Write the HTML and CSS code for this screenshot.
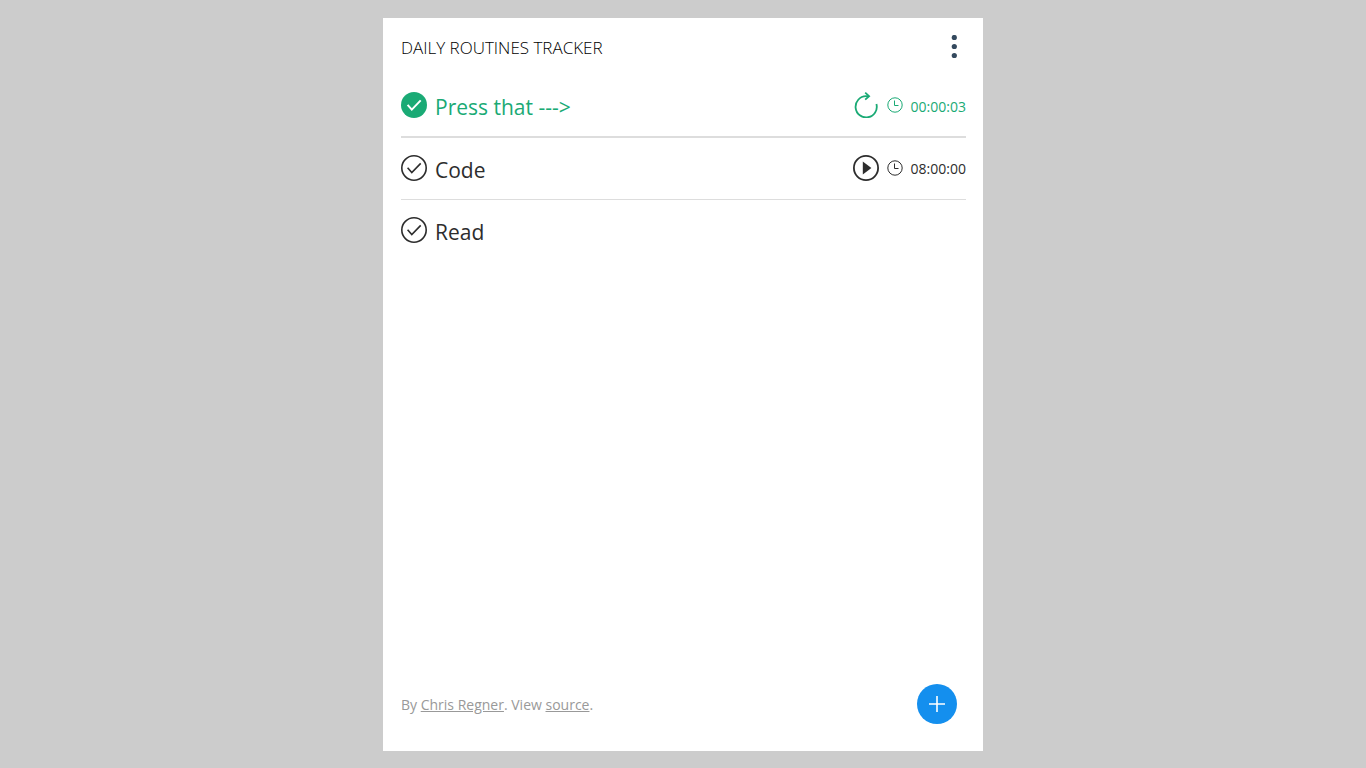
FILE: index.html
```html
<!DOCTYPE html>
<html lang="en">
<head>
    <meta charset="UTF-8">
    <meta name="viewport" content="width=device-width, initial-scale=1.0">
    <title>Daily Routines Tracker</title>
    <link rel="stylesheet" href="styles.css">
</head>
<body>
    <div class="container">
        <header class="header">
            <h1 class="title">Daily Routines Tracker</h1>
            <button type="button" class="iconButton menuButton" aria-label="Menu">
                <svg width="6" height="24" viewBox="0 0 6 24" fill="currentColor">
                    <circle cx="3.3" cy="2.5" r="2.6"/>
                    <circle cx="3.3" cy="11.5" r="2.6"/>
                    <circle cx="3.3" cy="20.5" r="2.6"/>
                </svg>
            </button>
        </header>
        <main class="content">
            <ul class="routines">
                <li class="routine done">
                    <button type="button" class="iconButton" aria-label="Mark as not done">
                        <svg width="26" height="26" viewBox="0 0 26 26" fill="none">
                            <circle cx="13" cy="13" r="13" fill="currentColor"/>
                            <path d="M6.6 12.8l4.2 4.8 8.9-9.2" stroke="#fff" stroke-width="2"/>
                        </svg>
                    </button>
                    <span class="routineName">Press that ---&gt;</span>
                    <button type="button" class="iconButton" aria-label="Restart">
                        <svg width="26" height="26" viewBox="0 0 26 26" fill="none" stroke="currentColor" stroke-width="1.8">
                            <path d="M15.5 4.2H13A10.6 10.6 0 1 0 23.4 12"/>
                            <path d="M12.2 0.7l3.9 3.5-3.9 3.5"/>
                        </svg>
                    </button>
                    <svg class="clock" width="16" height="16" viewBox="0 0 16 16" fill="none" stroke="currentColor">
                        <circle cx="8" cy="8" r="7.2"/>
                        <path d="M7.5 3.5v5h4"/>
                    </svg>
                    <time class="routineTime">00:00:03</time>
                </li>
                <li class="routine">
                    <button type="button" class="iconButton" aria-label="Mark as done">
                        <svg width="26" height="26" viewBox="0 0 26 26" fill="none" stroke="currentColor" stroke-width="1.6">
                            <circle cx="13" cy="13" r="12.2"/>
                            <path d="M6.6 12.8l4.2 4.8 8.9-9.2"/>
                        </svg>
                    </button>
                    <span class="routineName">Code</span>
                    <button type="button" class="iconButton" aria-label="Start">
                        <svg width="26" height="26" viewBox="0 0 26 26" fill="none">
                            <circle cx="13" cy="13" r="12.1" stroke="currentColor" stroke-width="1.8"/>
                            <path d="M9.8 6.6v13l8.6-6.5z" fill="currentColor"/>
                        </svg>
                    </button>
                    <svg class="clock" width="16" height="16" viewBox="0 0 16 16" fill="none" stroke="currentColor">
                        <circle cx="8" cy="8" r="7.2"/>
                        <path d="M7.5 3.5v5h4"/>
                    </svg>
                    <time class="routineTime">08:00:00</time>
                </li>
                <li class="routine">
                    <button type="button" class="iconButton" aria-label="Mark as done">
                        <svg width="26" height="26" viewBox="0 0 26 26" fill="none" stroke="currentColor" stroke-width="1.6">
                            <circle cx="13" cy="13" r="12.2"/>
                            <path d="M6.6 12.8l4.2 4.8 8.9-9.2"/>
                        </svg>
                    </button>
                    <span class="routineName">Read</span>
                </li>
            </ul>
        </main>
        <footer class="footer">
            <p class="credits">By <a href="#">Chris Regner</a>. View <a href="#">source</a>.</p>
            <button type="button" class="addButton" aria-label="Add routine">
                <svg width="16" height="16" viewBox="0 0 16 16" fill="none" stroke="currentColor" stroke-width="1.6">
                    <path d="M8 0v16M0 8h16"/>
                </svg>
            </button>
        </footer>
    </div>
</body>
</html>
```

FILE: styles.css
```css
:root {
    --text-color: #2d2d2d;
    --done-color: #1aaa75;
    --line-color: #ddd;
    --add-color: #148fee;
}
* {
    box-sizing: border-box;
}
body {
    display: flex;
    justify-content: center;
    min-height: 100vh;
    margin: 0;
    padding: 18px 18px 17px;
    background: #ccc;
    color: var(--text-color);
    font-family: 'Segoe UI', 'Open Sans', sans-serif;
}
.container {
    display: flex;
    flex-direction: column;
    width: 100%;
    max-width: 600px;
    background: white;
}
.header {
    display: flex;
    align-items: center;
    justify-content: space-between;
    height: 58px;
    padding: 0 26px 0 18px;
}
.title {
    margin: 0;
    color: black;
    font-size: 17px;
    font-weight: 300;
    text-transform: uppercase;
}
.iconButton {
    display: block;
    padding: 0;
    border: 0;
    background: none;
    color: inherit;
    cursor: pointer;
}
.iconButton svg {
    display: block;
}
.menuButton {
    color: #34495e;
}
.content {
    flex: 1;
    padding: 0 17px 0 18px;
}
.routines {
    margin: 0;
    padding: 0;
    list-style: none;
}
.routine {
    display: flex;
    align-items: center;
    gap: 8px;
    height: 62px;
    padding-bottom: 2px;
    border-bottom: 1px solid var(--line-color);
}
.routine:last-child {
    border-bottom: 0;
}
.done {
    border-bottom-width: 2px;
    color: var(--done-color);
}
.routineName {
    flex: 1;
    padding-top: 4px;
    font-size: 21px;
}
.routineTime {
    padding-top: 2px;
    font-size: 14px;
}
.footer {
    display: flex;
    align-items: center;
    justify-content: space-between;
    padding: 0 26px 27px 18px;
}
.credits {
    margin: 0;
    color: #999;
    font-size: 14px;
}
.credits a {
    color: inherit;
}
.addButton {
    display: flex;
    align-items: center;
    justify-content: center;
    width: 40px;
    height: 40px;
    padding: 0;
    border: 0;
    border-radius: 50%;
    background: var(--add-color);
    color: white;
    cursor: pointer;
}
```
